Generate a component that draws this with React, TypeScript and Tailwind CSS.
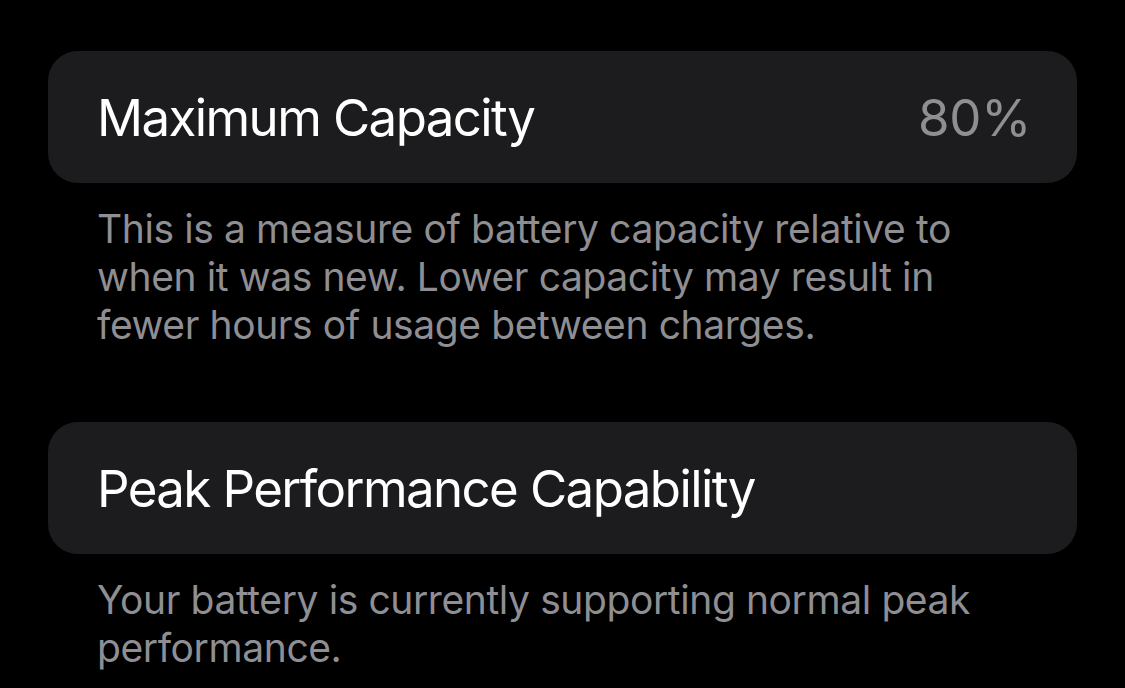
import React from 'react';

interface RowProps {
  title: string;
  value?: string;
}

function Row({ title, value }: RowProps) {
  return (
    <div className="flex h-[132px] items-center justify-between rounded-[30px] bg-[#1c1c1e] pl-[49px] pr-[46px]">
      <span className="text-[51px] leading-none tracking-[-1.6px] text-white">{title}</span>
      {value && <span className="text-[51px] leading-none tracking-[-0.3px] text-[#8e8e93]">{value}</span>}
    </div>
  );
}

function Footnote({ lines }: { lines: string[] }) {
  return (
    <p className="mt-[22px] px-[49px] text-[39px] leading-[48px] tracking-[-0.4px] text-[#8e8e93]">
      {lines.map((l, i) => (
        <span key={i} className="block whitespace-nowrap">
          {l}
        </span>
      ))}
    </p>
  );
}

export default function App() {
  return (
    <div
      className="h-[688px] w-[1125px] overflow-hidden bg-black px-[48px] pt-[51px]"
      style={{ fontFamily: 'Inter, "Noto Sans", sans-serif' }}
    >
      <Row title="Maximum Capacity" value="80%" />
      <Footnote
        lines={[
          'This is a measure of battery capacity relative to',
          'when it was new. Lower capacity may result in',
          'fewer hours of usage between charges.',
        ]}
      />
      <div className="mt-[73px]">
        <Row title="Peak Performance Capability" />
      </div>
      <Footnote lines={['Your battery is currently supporting normal peak', 'performance.']} />
    </div>
  );
}
